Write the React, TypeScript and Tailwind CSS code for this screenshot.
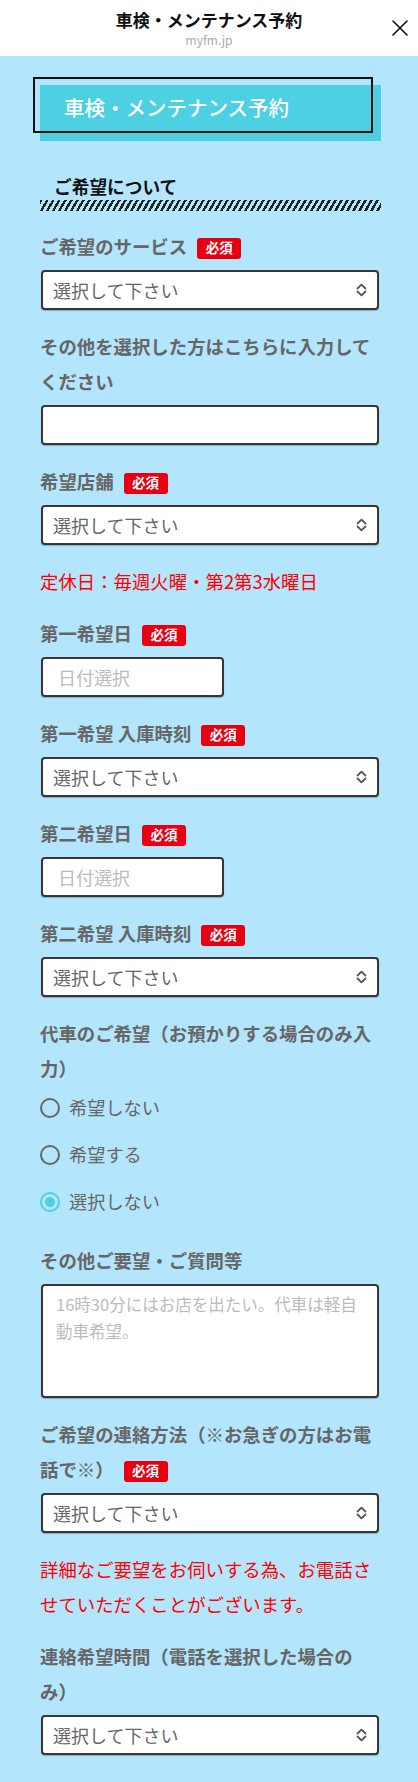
import React from "react";

function Req() {
  return (
    <span className="ml-[10px] inline-flex h-[21px] w-[44px] -translate-y-[1px] items-center justify-center rounded-[3px] bg-[#e60012] align-middle text-[13.5px] font-bold leading-none text-white">
      必須
    </span>
  );
}

function Label({ children, req, mb = "mb-[6px]" }: { children: React.ReactNode; req?: boolean; mb?: string }) {
  return (
    <div className={`${mb} text-[18.4px] font-bold leading-[35px] text-[#666]`}>
      {children}
      {req && <Req />}
    </div>
  );
}

function Select({ mb = "mb-[19px]" }: { mb?: string }) {
  return (
    <div
      className={`${mb} mx-px flex h-[40px] items-center justify-between rounded-[4px] border-2 border-[#3a3536] bg-white pl-[10px] pr-[9px] shadow-[0_1px_1px_rgba(0,0,0,0.25)]`}
    >
      <span className="text-[18px] leading-none text-[#666]">選択して下さい</span>
      <svg width="13" height="14" viewBox="0 0 13 14" fill="none" stroke="#555" strokeWidth="1.8" strokeLinecap="round" strokeLinejoin="round">
        <path d="M2.5 5.5 L6.5 1.6 L10.5 5.5" />
        <path d="M2.5 8.5 L6.5 12.4 L10.5 8.5" />
      </svg>
    </div>
  );
}

function DateInput() {
  return (
    <input
      readOnly
      placeholder="日付選択"
      className="mx-px mb-[19px] block h-[40px] w-[183px] rounded-[4px] border-2 border-[#3a3536] bg-white pl-[15px] text-[18px] text-[#333] shadow-[0_1px_1px_rgba(0,0,0,0.25)] outline-none placeholder:text-[#bbb]"
    />
  );
}

function Radio({ label, checked }: { label: string; checked?: boolean }) {
  return (
    <div className="flex h-[35px] items-center gap-[9px]">
      {checked ? (
        <span className="flex h-[20px] w-[20px] items-center justify-center rounded-full border-[2.5px] border-[#4dd0e1]">
          <span className="h-[10px] w-[10px] rounded-full bg-[#4dd0e1]" />
        </span>
      ) : (
        <span className="h-[20px] w-[20px] rounded-full border-2 border-[#666]" />
      )}
      <span className="text-[18.2px] leading-none text-[#666]">{label}</span>
    </div>
  );
}

export default function App() {
  return (
    <div className="min-h-[1782px] bg-[#b3e5fc] font-['Noto_Sans_CJK_JP','Noto_Sans',sans-serif] [text-spacing-trim:space-all]">
      <header className="grid h-[56px] grid-cols-[56px_1fr_56px] items-center bg-white">
        <div />
        <div className="flex flex-col items-center">
          <div className="text-[17px] font-bold leading-[22px] text-[#111]">車検・メンテナンス予約</div>
          <div className="mt-px text-[12px] leading-[16px] text-[#aaa]">myfm.jp</div>
        </div>
        <div className="flex justify-end pr-[10px]">
          <svg width="16" height="16" viewBox="0 0 16 16" fill="none" stroke="#111" strokeWidth="1.6" strokeLinecap="round">
            <path d="M1 1 L15 15 M15 1 L1 15" />
          </svg>
        </div>
      </header>

      <main className="pb-[27px] pl-[40px] pr-[38px]">
        <div className="relative mt-[29px] h-[56px] w-[calc(100%+1px)] bg-[#4dd0e1] pl-[24px] pt-[8px]">
          <div className="absolute -left-[7px] -top-[8px] h-[56px] w-[340px] border-2 border-[#111]" />
          <div className="text-[20.5px] font-medium leading-[28px] text-white">車検・メンテナンス予約</div>
        </div>

        <div className="mt-[32px] pl-[14px] text-[17.7px] font-bold leading-[27px] text-[#111]">ご希望について</div>
        <div className="mb-[18px] h-[11px] w-[calc(100%+1px)] bg-[repeating-linear-gradient(120deg,#222_0px,#222_2.4px,transparent_2.4px,transparent_5.2px)]" />

        <Label req>ご希望のサービス</Label>
        <Select />

        <Label>その他を選択した方はこちらに入力してください</Label>
        <input
          readOnly
          className="mx-px mb-[19px] block h-[40px] w-[calc(100%-2px)] rounded-[4px] border-2 border-[#3a3536] bg-white px-[12px] text-[18px] shadow-[0_1px_1px_rgba(0,0,0,0.25)] outline-none"
        />

        <Label req>希望店舗</Label>
        <Select />
        <div className="mb-[17px] text-[18.4px] leading-[35px] text-[#ff0000]">定休日：毎週火曜・第2第3水曜日</div>

        <Label req>第一希望日</Label>
        <DateInput />

        <Label req>第一希望 入庫時刻</Label>
        <Select />

        <Label req>第二希望日</Label>
        <DateInput />

        <Label req>第二希望 入庫時刻</Label>
        <Select />

        <Label mb="mb-[4px]">代車のご希望（お預かりする場合のみ入力）</Label>
        <div className="mb-[24px] flex flex-col gap-[12px]">
          <Radio label="希望しない" />
          <Radio label="希望する" />
          <Radio label="選択しない" checked />
        </div>

        <Label>その他ご要望・ご質問等</Label>
        <textarea
          readOnly
          placeholder="16時30分にはお店を出たい。代車は軽自動車希望。"
          className="mx-px mb-[19px] block h-[114px] w-[calc(100%-2px)] resize-none rounded-[4px] border-2 border-[#3a3536] bg-white pl-[13px] pr-[12px] pt-[5px] text-[16.5px] leading-[27px] shadow-[0_1px_1px_rgba(0,0,0,0.25)] outline-none placeholder:text-[#bbb]"
        />

        <Label req>ご希望の連絡方法（※お急ぎの方はお電話で※）</Label>
        <Select />
        <div className="mb-[17px] text-[18.4px] leading-[35px] text-[#ff0000]">
          詳細なご要望をお伺いする為、お電話させていただくことがございます。
        </div>

        <Label>連絡希望時間（電話を選択した場合のみ）</Label>
        <Select mb="mb-0" />
      </main>
    </div>
  );
}
